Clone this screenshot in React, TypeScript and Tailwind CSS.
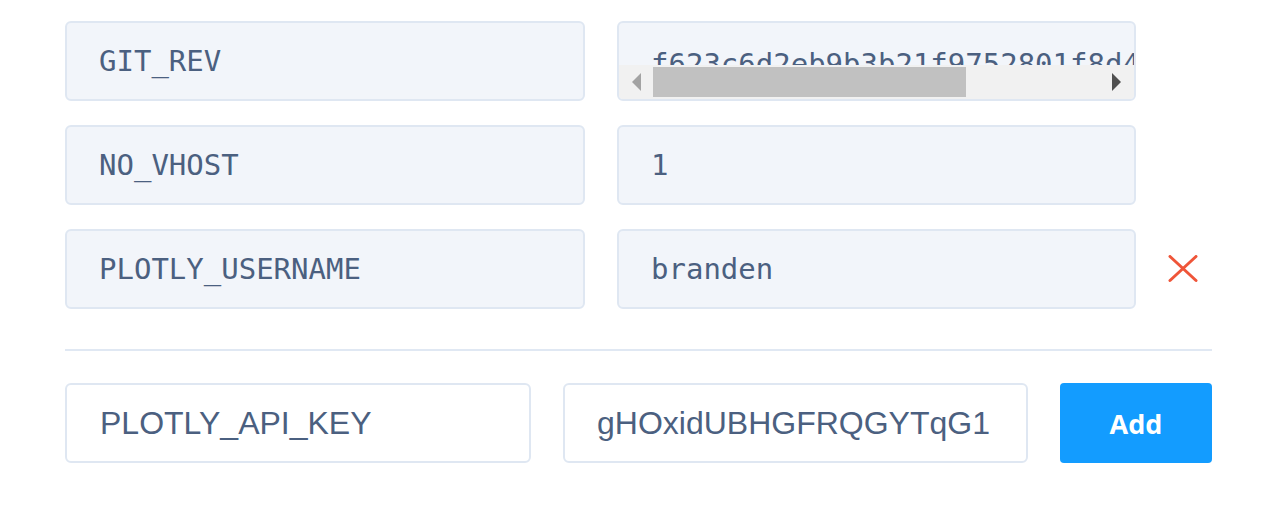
import React from "react";

const mono = { fontFamily: '"DejaVu Sans Mono", monospace' };

function Box({ children, className = "" }: { children?: React.ReactNode; className?: string }) {
  return (
    <div
      className={`relative h-[80px] rounded-[6px] border-2 border-[#dfe7f2] bg-[#f2f5fa] overflow-hidden flex items-center text-[29px] text-[#4b6080] whitespace-nowrap ${className}`}
      style={mono}
    >
      {children}
    </div>
  );
}

function FakeScrollbar() {
  return (
    <div className="absolute left-0 right-0 bottom-0 h-[34px] bg-[#f1f1f1]">
      <svg className="absolute left-[13px] top-[8px]" width="9" height="18" viewBox="0 0 9 18">
        <polygon points="9,0 0,9 9,18" fill="#a3a3a3" />
      </svg>
      <div className="absolute left-[34px] top-[2px] h-[30px] w-[313px] bg-[#c1c1c1]" />
      <svg className="absolute right-[13px] top-[8px]" width="9" height="18" viewBox="0 0 9 18">
        <polygon points="0,0 9,9 0,18" fill="#505050" />
      </svg>
    </div>
  );
}

function XIcon() {
  return (
    <svg width="30" height="28" viewBox="0 0 30 28">
      <line x1="2" y1="1.5" x2="28" y2="25.5" stroke="#ef5539" strokeWidth="3" strokeLinecap="round" />
      <line x1="28" y1="1.5" x2="2" y2="25.5" stroke="#ef5539" strokeWidth="3" strokeLinecap="round" />
    </svg>
  );
}

export default function App() {
  return (
    <div className="w-[1284px] h-[518px] bg-white pl-[65px] pt-[21px]">
      <div className="w-[1147px]">
        <div className="grid grid-cols-[520px_519px_76px] gap-x-8 gap-y-6">
          <Box className="pl-[32px] pt-[2px]">GIT_REV</Box>
          <Box className="pl-[32px] items-start pt-[20px]">
            <span>f623c6d2eb9b3b21f9752801f8d4a0e6c7b95d13</span>
            <FakeScrollbar />
          </Box>
          <div />
          <Box className="pl-[32px] pt-[2px]">NO_VHOST</Box>
          <Box className="pl-[32px] pt-[2px]">1</Box>
          <div />
          <Box className="pl-[32px] pt-[2px]">PLOTLY_USERNAME</Box>
          <Box className="pl-[32px] pt-[2px]">branden</Box>
          <div className="flex items-center">
            <XIcon />
          </div>
        </div>
        <div className="mt-[40px] h-[2px] bg-[#e0e8f3]" />
        <div className="mt-[32px] flex gap-8">
          <div
            className="w-[466px] h-[80px] rounded-[6px] border-2 border-[#dfe7f2] bg-white flex items-center pl-[33px] text-[32px] text-[#4b6080] whitespace-nowrap overflow-hidden"
            style={{ fontFamily: '"Liberation Sans", Arial, sans-serif' }}
          >
            PLOTLY_API_KEY
          </div>
          <div
            className="w-[465px] h-[80px] rounded-[6px] border-2 border-[#dfe7f2] bg-white flex items-center pl-[32px] text-[32px] text-[#4b6080] whitespace-nowrap overflow-hidden"
            style={{ fontFamily: '"Liberation Sans", Arial, sans-serif' }}
          >
            gHOxidUBHGFRQGYTqG1
          </div>
          <button
            className="w-[152px] h-[80px] rounded-[4px] bg-[#139cff] text-white text-[27px] font-bold flex items-center justify-center pt-[3px]"
            style={{ fontFamily: '"Open Sans", sans-serif' }}
          >
            Add
          </button>
        </div>
      </div>
    </div>
  );
}
